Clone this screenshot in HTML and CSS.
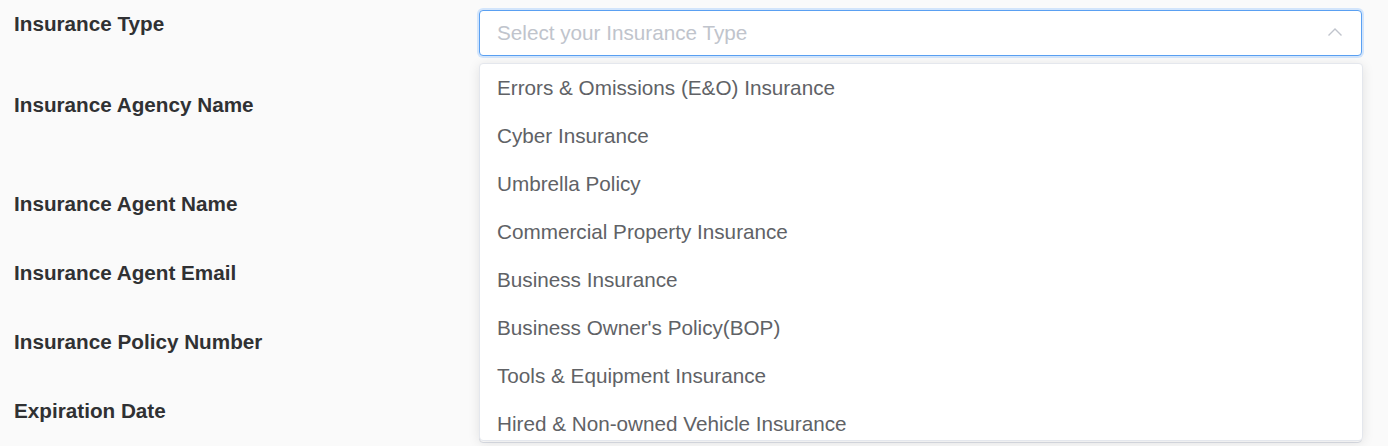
FILE: index.html
```html
<!DOCTYPE html>
<html>
<head>
<meta charset="utf-8">
<link rel="stylesheet" href="styles.css">
</head>
<body>
<form class="form">
  <div class="row row--first">
    <label class="label">Insurance Type</label>
    <div class="field">
      <div class="select is-focus">
        <span class="placeholder">Select your Insurance Type</span>
        <svg class="chevron" width="16" height="10" viewBox="0 0 16 10"><path d="M1.5 8.5 L8 2 L14.5 8.5" fill="none" stroke="#c0c4cc" stroke-width="1.4"/></svg>
      </div>
      <ul class="dropdown">
        <li class="option">Errors &amp; Omissions (E&amp;O) Insurance</li>
        <li class="option">Cyber Insurance</li>
        <li class="option">Umbrella Policy</li>
        <li class="option">Commercial Property Insurance</li>
        <li class="option">Business Insurance</li>
        <li class="option">Business Owner's Policy(BOP)</li>
        <li class="option">Tools &amp; Equipment Insurance</li>
        <li class="option">Hired &amp; Non-owned Vehicle Insurance</li>
      </ul>
    </div>
  </div>
  <div class="row row--tall">
    <label class="label">Insurance Agency Name</label>
    <div class="field"><div class="input"></div></div>
  </div>
  <div class="row">
    <label class="label">Insurance Agent Name</label>
    <div class="field"><div class="input"></div></div>
  </div>
  <div class="row">
    <label class="label">Insurance Agent Email</label>
    <div class="field"><div class="input"></div></div>
  </div>
  <div class="row">
    <label class="label">Insurance Policy Number</label>
    <div class="field"><div class="input"></div></div>
  </div>
  <div class="row">
    <label class="label">Expiration Date</label>
    <div class="field"><div class="input"></div></div>
  </div>
</form>
</body>
</html>
```

FILE: styles.css
```css
html, body {
  margin: 0;
  padding: 0;
  background: #fafafa;
  height: 446px;
  overflow: hidden;
}
body {
  font-family: "Liberation Sans", Arial, sans-serif;
}
.form {
  padding: 10px 26px 0 14px;
}
.row {
  display: grid;
  grid-template-columns: 465px 1fr;
  margin-bottom: 23px;
}
.row--first {
  margin-bottom: 35px;
}
.row--tall {
  margin-bottom: 53px;
}
.label {
  font-size: 20.7px;
  font-weight: bold;
  color: #303133;
  line-height: 28px;
}
.field {
  position: relative;
}
.select, .input {
  box-sizing: border-box;
  height: 46px;
  border: 1px solid #dcdfe6;
  border-radius: 4px;
  background: #fff;
}
.select {
  display: flex;
  align-items: center;
  justify-content: space-between;
  padding: 0 18px 0 17px;
}
.select.is-focus {
  border-color: #5aa0f2;
  box-shadow: 0 0 0 2px #d3e5fb;
}
.placeholder {
  font-size: 20.7px;
  color: #c0c4cc;
}
.chevron {
  display: block;
  margin-top: -2px;
}
.dropdown {
  position: absolute;
  z-index: 10;
  left: 0;
  right: -1px;
  top: 53px;
  height: 376px;
  margin: 0;
  padding: 0;
  list-style: none;
  overflow: hidden;
  background: #fff;
  border: 1px solid #e4e7ed;
  border-radius: 4px;
  box-shadow: 0 2px 12px 0 rgba(0, 0, 0, 0.1);
}
.option {
  height: 48px;
  line-height: 48px;
  padding: 0 17px;
  font-size: 20.7px;
  color: #606266;
  white-space: nowrap;
}
```
